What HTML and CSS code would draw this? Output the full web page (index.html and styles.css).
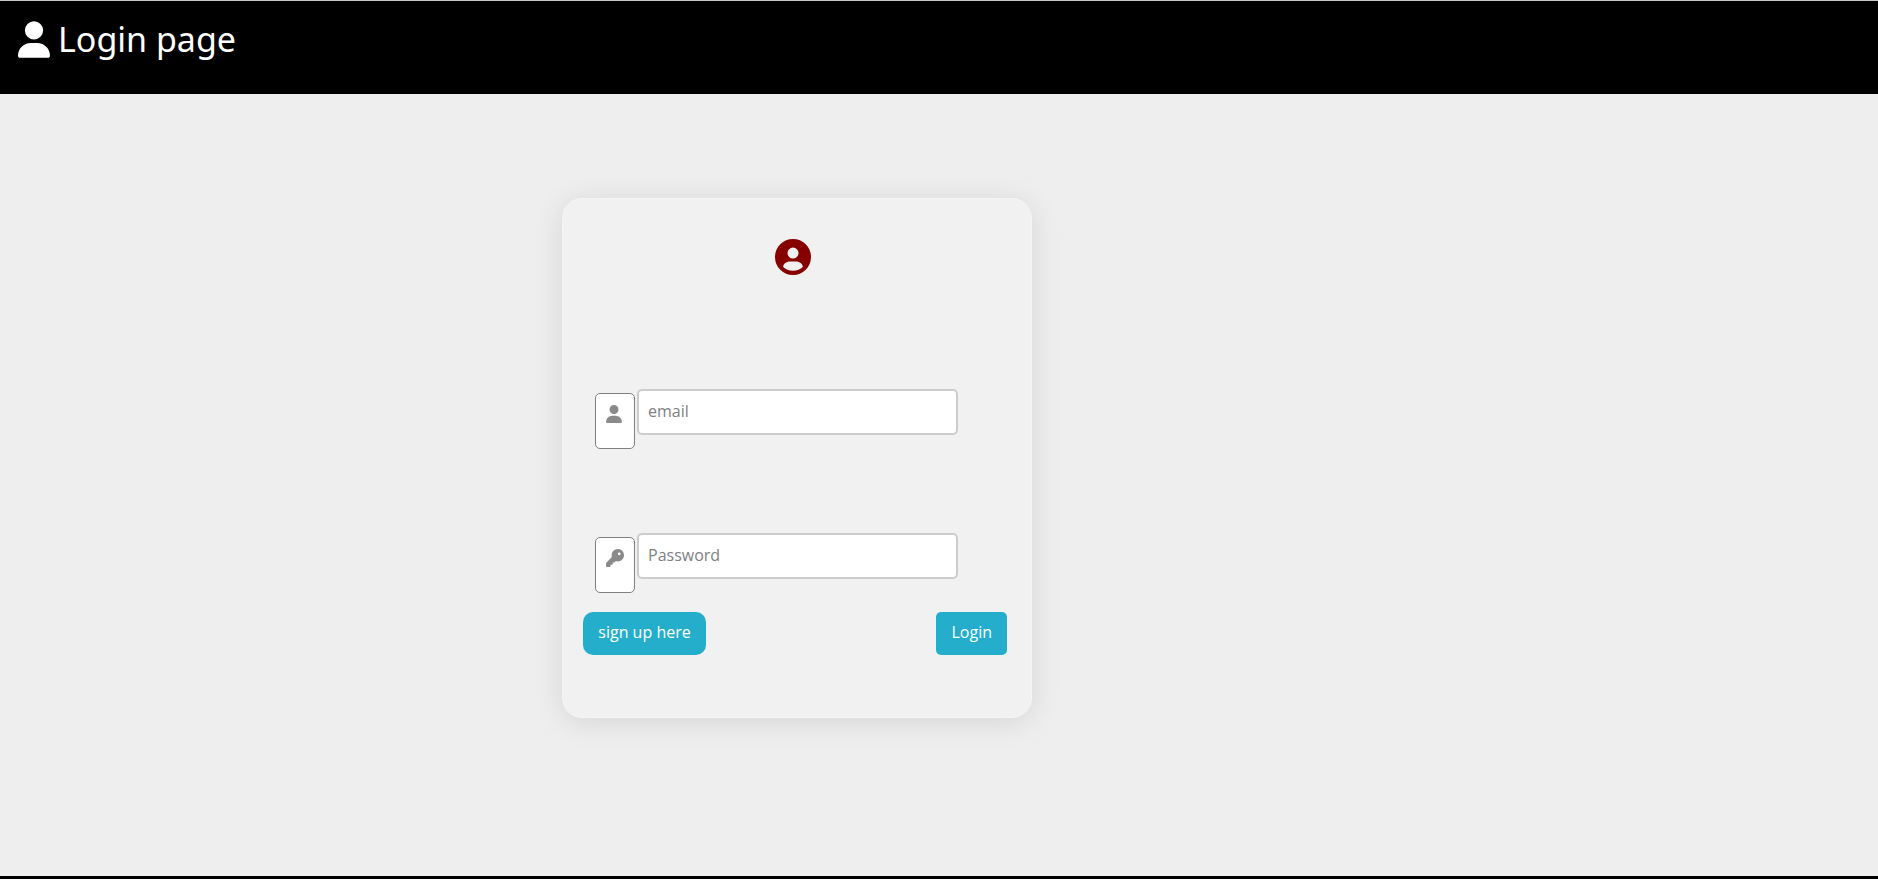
FILE: index.html
```html
<!DOCTYPE html>
<html lang="en">
<head>
<meta charset="utf-8">
<title>Login page</title>
<link rel="stylesheet" href="styles.css">
</head>
<body>
<header class="header">
  <svg class="header-icon" viewBox="0 0 448 512" aria-hidden="true"><path d="M224 256A128 128 0 1 0 224 0a128 128 0 1 0 0 256zm-45.700 48C79.800 304 0 383.800 0 482.300C0 498.700 13.300 512 29.700 512H418.300c16.400 0 29.700-13.300 29.700-29.700C448 383.800 368.200 304 269.700 304H178.300z"/></svg>
  <h1 class="header-title">Login page</h1>
</header>
<main class="main">
  <form class="card">
    <svg class="avatar" viewBox="0 0 36 36" aria-hidden="true"><path fill-rule="evenodd" d="M18 0a18 18 0 1 0 0 36a18 18 0 1 0 0-36zM18 8.600a5.500 5.500 0 1 1 0 11a5.500 5.500 0 1 1 0-11zM15.500 22.600h5c4.500 0 7.300 2.500 7.300 5.300c-2.300 2.400-5.800 3.800-9.800 3.800s-7.500-1.400-9.800-3.800c0-2.800 2.800-5.300 7.300-5.300z"/></svg>
    <div class="field">
      <label class="field-icon" for="email" aria-label="Email"><svg class="icon-user" viewBox="0 0 448 512" aria-hidden="true"><path d="M224 256A128 128 0 1 0 224 0a128 128 0 1 0 0 256zm-45.700 48C79.800 304 0 383.800 0 482.300C0 498.700 13.300 512 29.700 512H418.300c16.400 0 29.700-13.300 29.700-29.700C448 383.800 368.200 304 269.700 304H178.300z"/></svg></label>
      <input class="field-input" id="email" type="email" placeholder="email">
    </div>
    <div class="field">
      <label class="field-icon" for="password" aria-label="Password"><svg class="icon-key" viewBox="0 0 512 512" aria-hidden="true"><path d="M336 352c97.200 0 176-78.800 176-176S433.200 0 336 0S160 78.800 160 176c0 18.700 2.900 36.800 8.300 53.700L7 391c-4.500 4.500-7 10.600-7 17v80c0 13.300 10.700 24 24 24h80c13.300 0 24-10.700 24-24V448h40c13.300 0 24-10.700 24-24V384h40c6.400 0 12.500-2.500 17-7l33.300-33.300c16.900 5.400 35 8.300 53.700 8.300zM376 96a40 40 0 1 1 0 80 40 40 0 1 1 0-80z"/></svg></label>
      <input class="field-input" id="password" type="password" placeholder="Password">
    </div>
    <div class="actions">
      <a class="button button-signup" href="#signup">sign up here</a>
      <button class="button button-login" type="submit">Login</button>
    </div>
  </form>
</main>
<footer class="footer"></footer>
</body>
</html>
```
FILE: styles.css
```css
* { box-sizing: border-box; }

body {
  margin: 0;
  min-height: 100vh;
  display: flex;
  flex-direction: column;
  background: #eee;
  font-family: "Open Sans", sans-serif;
}

.header {
  display: flex;
  align-items: flex-start;
  gap: 8px;
  padding: 16px 18px 32px;
  border-top: 1px solid #c8c8c8;
  background: #000;
  color: #fff;
}

.header-icon {
  width: 32px;
  height: 37px;
  margin-top: 4px;
  fill: #fff;
}

.header-title {
  margin: 0;
  font: 400 34px/45px "Noto Sans", sans-serif;
}

.main {
  flex: 1;
  display: flex;
  justify-content: center;
  align-items: flex-start;
  padding: 104px 284px 104px 0;
}

.card {
  display: flex;
  flex-direction: column;
  width: 470px;
  padding: 40px 24px 62px 20px;
  border: 1px solid #f5f5f5;
  border-radius: 20px;
  background: #f1f1f1;
  box-shadow: 0 4px 30px rgba(0, 0, 0, 0.1);
}

.avatar {
  align-self: center;
  width: 36px;
  height: 36px;
  margin: 0 4px 114px 0;
  fill: #860000;
}

.field {
  display: flex;
  align-items: flex-start;
  gap: 2px;
  margin: 0 49px 84px 12px;
}

.field + .field { margin-bottom: 19px; }

.field-icon {
  display: flex;
  justify-content: flex-start;
  align-items: flex-start;
  width: 40px;
  height: 56px;
  margin-top: 4px;
  padding: 11px 10px;
  border: 1px solid #808080;
  border-radius: 5px;
  background: #fff;
  fill: #8a8a8a;
}

.icon-user { width: 16px; height: 18px; }
.icon-key { width: 18px; height: 18px; }

.field-input {
  flex: 1;
  min-width: 0;
  height: 46px;
  padding: 0 9px 2px;
  border: 2px solid #ccc;
  border-radius: 5px;
  background: #fff;
  color: #333;
  font: 400 16px/20px "Open Sans", sans-serif;
}

.field-input::placeholder { color: #808080; }

.actions {
  display: flex;
  justify-content: space-between;
  align-items: flex-start;
}

.button {
  padding: 9px 15px 11px;
  border: 0;
  border-radius: 5px;
  background: #24aecb;
  color: #fff;
  font: 400 16px/23px "Open Sans", sans-serif;
  text-align: center;
  text-decoration: none;
}

.button-signup {
  min-width: 123px;
  border-radius: 10px;
}

.button-login { min-width: 70px; }

.footer {
  height: 3px;
  background: #000;
}
```
